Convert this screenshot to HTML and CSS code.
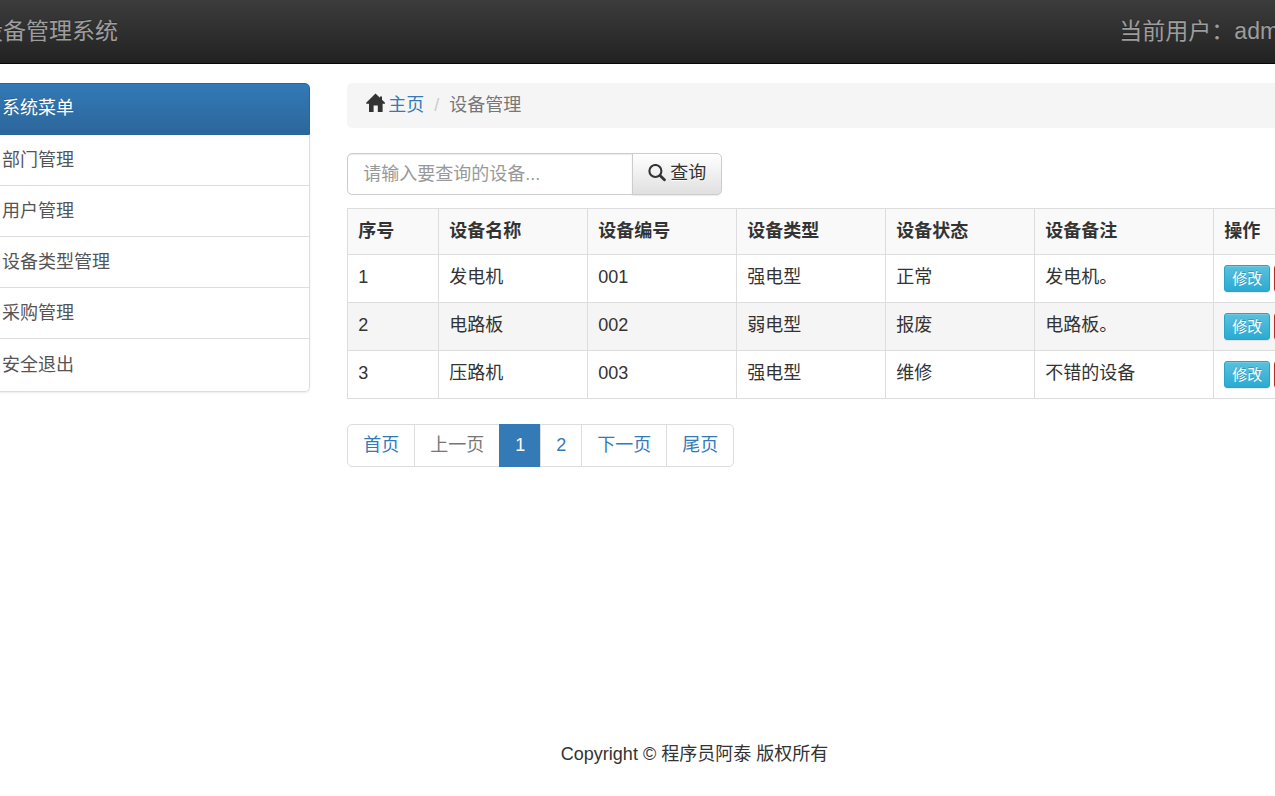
FILE: index.html
```html
<!DOCTYPE html>
<html lang="zh-CN">
<head>
<meta charset="utf-8">
<title>设备管理系统</title>
<link rel="stylesheet" href="styles.css">
</head>
<body>
<header class="navbar">
  <div class="container navbar-inner">
    <a class="brand" href="#">设备管理系统</a>
    <span class="current-user">当前用户：admin</span>
  </div>
</header>
<div class="container layout">
  <nav class="menu">
    <a class="menu-item active" href="#">系统菜单</a>
    <a class="menu-item" href="#">部门管理</a>
    <a class="menu-item" href="#">用户管理</a>
    <a class="menu-item" href="#">设备类型管理</a>
    <a class="menu-item" href="#">采购管理</a>
    <a class="menu-item" href="#">安全退出</a>
  </nav>
  <main class="main">
    <div class="breadcrumb">
      <svg class="icon-home" viewBox="0 0 20 20" aria-hidden="true"><path d="M9 0.9 L9.5 0.5 L10 0.9 L14 4.8 V3.4 H16 V6.8 L19 9.8 V10.8 H16.6 V19 H11.8 V12.6 H7.6 V19 H3 V10.8 H0.2 V9.8 Z" fill="#333"/></svg>
      <a class="crumb-link" href="#">主页</a>
      <span class="crumb-sep">/</span>
      <span class="crumb-current">设备管理</span>
    </div>
    <form class="search">
      <input class="search-input" type="text" placeholder="请输入要查询的设备..." aria-label="请输入要查询的设备">
      <button class="search-button" type="button">
        <svg class="icon-search" viewBox="0 0 18 18" aria-hidden="true"><circle cx="7.4" cy="7" r="6" fill="none" stroke="#333" stroke-width="2.1"/><path d="M12 11.6 L16.4 15.8" stroke="#333" stroke-width="2.8" stroke-linecap="round"/></svg>
        <span>查询</span>
      </button>
    </form>
    <table class="table">
      <colgroup>
        <col class="col-index"><col class="col-text"><col class="col-text"><col class="col-text"><col class="col-text"><col class="col-note"><col>
      </colgroup>
      <thead>
        <tr><th>序号</th><th>设备名称</th><th>设备编号</th><th>设备类型</th><th>设备状态</th><th>设备备注</th><th>操作</th></tr>
      </thead>
      <tbody>
        <tr><td>1</td><td>发电机</td><td>001</td><td>强电型</td><td>正常</td><td>发电机。</td><td><div class="actions"><button class="btn info" type="button">修改</button><button class="btn danger" type="button">删除</button></div></td></tr>
        <tr><td>2</td><td>电路板</td><td>002</td><td>弱电型</td><td>报废</td><td>电路板。</td><td><div class="actions"><button class="btn info" type="button">修改</button><button class="btn danger" type="button">删除</button></div></td></tr>
        <tr><td>3</td><td>压路机</td><td>003</td><td>强电型</td><td>维修</td><td>不错的设备</td><td><div class="actions"><button class="btn info" type="button">修改</button><button class="btn danger" type="button">删除</button></div></td></tr>
      </tbody>
    </table>
    <nav class="pagination" aria-label="分页">
      <a class="page" href="#">首页</a>
      <a class="page disabled" href="#">上一页</a>
      <a class="page current" href="#">1</a>
      <a class="page" href="#">2</a>
      <a class="page" href="#">下一页</a>
      <a class="page" href="#">尾页</a>
    </nav>
  </main>
</div>
<footer class="container footer">Copyright © 程序员阿泰 版权所有</footer>
</body>
</html>
```

FILE: styles.css
```css
* {
  box-sizing: border-box;
}

body {
  margin: 0;
  overflow-x: hidden;
  background: #fff;
  color: #333;
  font: 18px/25px "Liberation Sans", "Noto Sans CJK SC", sans-serif;
}

a {
  text-decoration: none;
}

button,
input {
  font-family: inherit;
}

/* The centred column is wider than the window and is clipped on both sides. */
.container {
  margin: 0 -151px 0 -37px;
  padding: 0 19px;
}

.navbar {
  overflow: hidden;
  background: linear-gradient(#3c3c3c, #222);
  border-bottom: 1px solid #080808;
}

.navbar-inner {
  display: flex;
  justify-content: space-between;
  padding-right: 129px;
  padding-left: 17px;
  font-size: 23px;
  line-height: 25px;
}

.brand,
.current-user {
  padding: 19px 0;
  color: #9d9d9d;
  text-shadow: 0 -1px 0 rgba(0, 0, 0, 0.25);
}

.layout {
  display: grid;
  grid-template-columns: calc(25% - 28px) minmax(0, 1fr);
  gap: 37px;
  align-items: start;
  margin-top: 19px;
}

.menu {
  border-radius: 5px;
  box-shadow: 0 1px 2px rgba(0, 0, 0, 0.08);
}

.menu-item {
  display: block;
  padding: 13px 19px 12px;
  border: 1px solid #ddd;
  border-top: 0;
  color: #555;
  line-height: 25px;
}

.menu-item:last-child {
  padding: 14px 19px 13px;
  border-radius: 0 0 5px 5px;
}

.menu-item.active {
  padding: 12px 19px 13px;
  border: 1px solid #2b669a;
  border-radius: 5px 5px 0 0;
  background: linear-gradient(#337ab7, #2b669a) border-box;
  color: #fff;
  text-shadow: 0 -1px 0 #286090;
}

.breadcrumb {
  display: flex;
  align-items: center;
  padding: 10px 19px;
  border-radius: 5px;
  background: #f5f5f5;
}

.icon-home {
  width: 20px;
  height: 20px;
  margin-bottom: 5px;
}

.crumb-link {
  margin-left: 2px;
  color: #337ab7;
}

.crumb-sep {
  padding: 0 10px;
  color: #ccc;
}

.crumb-current {
  color: #777;
}

.search {
  display: flex;
  margin: 25px 0 13px;
}

.search-input {
  width: 286px;
  height: 42px;
  padding: 0 15px;
  border: 1px solid #ccc;
  border-radius: 5px 0 0 5px;
  box-shadow: inset 0 1px 1px rgba(0, 0, 0, 0.08);
  color: #555;
  font-size: 18px;
}

.search-input::placeholder {
  color: #999;
}

.search-button {
  display: flex;
  align-items: center;
  gap: 4px;
  height: 42px;
  margin-left: -1px;
  padding: 0 15px 2px;
  border: 1px solid #ccc;
  border-radius: 0 5px 5px 0;
  background: linear-gradient(#fff, #e0e0e0);
  box-shadow: 0 1px 1px rgba(0, 0, 0, 0.08);
  color: #333;
  font-size: 18px;
  line-height: 25px;
  text-shadow: 0 1px 0 #fff;
}

.icon-search {
  width: 18px;
  height: 18px;
}

.table {
  width: 100%;
  table-layout: fixed;
  border-collapse: collapse;
}

.col-index {
  width: 91px;
}

.col-text {
  width: 149px;
}

.col-note {
  width: 179px;
}

.table th,
.table td {
  padding: 10px;
  border: 1px solid #ddd;
  text-align: left;
  vertical-align: top;
}

.table th {
  background: #f9f9f9;
}

.table tbody tr:nth-child(even) {
  background: #f5f5f5;
}

.actions {
  display: flex;
  gap: 4px;
}

.btn {
  width: 46px;
  height: 27px;
  padding: 0;
  border: 1px solid;
  border-radius: 3px;
  box-shadow: inset 0 1px 0 rgba(255, 255, 255, 0.15), 0 1px 1px rgba(0, 0, 0, 0.08);
  color: #fff;
  font-size: 15px;
  line-height: 24px;
  text-shadow: 0 -1px 0 rgba(0, 0, 0, 0.2);
}

.btn.info {
  border-color: #28a4c9;
  background: linear-gradient(#5bc0de, #2aabd2);
}

.btn.danger {
  border-color: #b92c28;
  background: linear-gradient(#d9534f, #c12e2a);
}

.pagination {
  display: flex;
  margin-top: 25px;
}

.page {
  margin-left: -1px;
  padding: 8px 15px;
  border: 1px solid #ddd;
  color: #337ab7;
}

.page:first-child {
  margin-left: 0;
  border-radius: 5px 0 0 5px;
}

.page:last-child {
  border-radius: 0 5px 5px 0;
}

.page.disabled {
  color: #777;
}

.page.current {
  border-color: #337ab7;
  background: #337ab7;
  color: #fff;
}

.footer {
  margin-top: 275px;
  padding-bottom: 25px;
  text-align: center;
}
```
